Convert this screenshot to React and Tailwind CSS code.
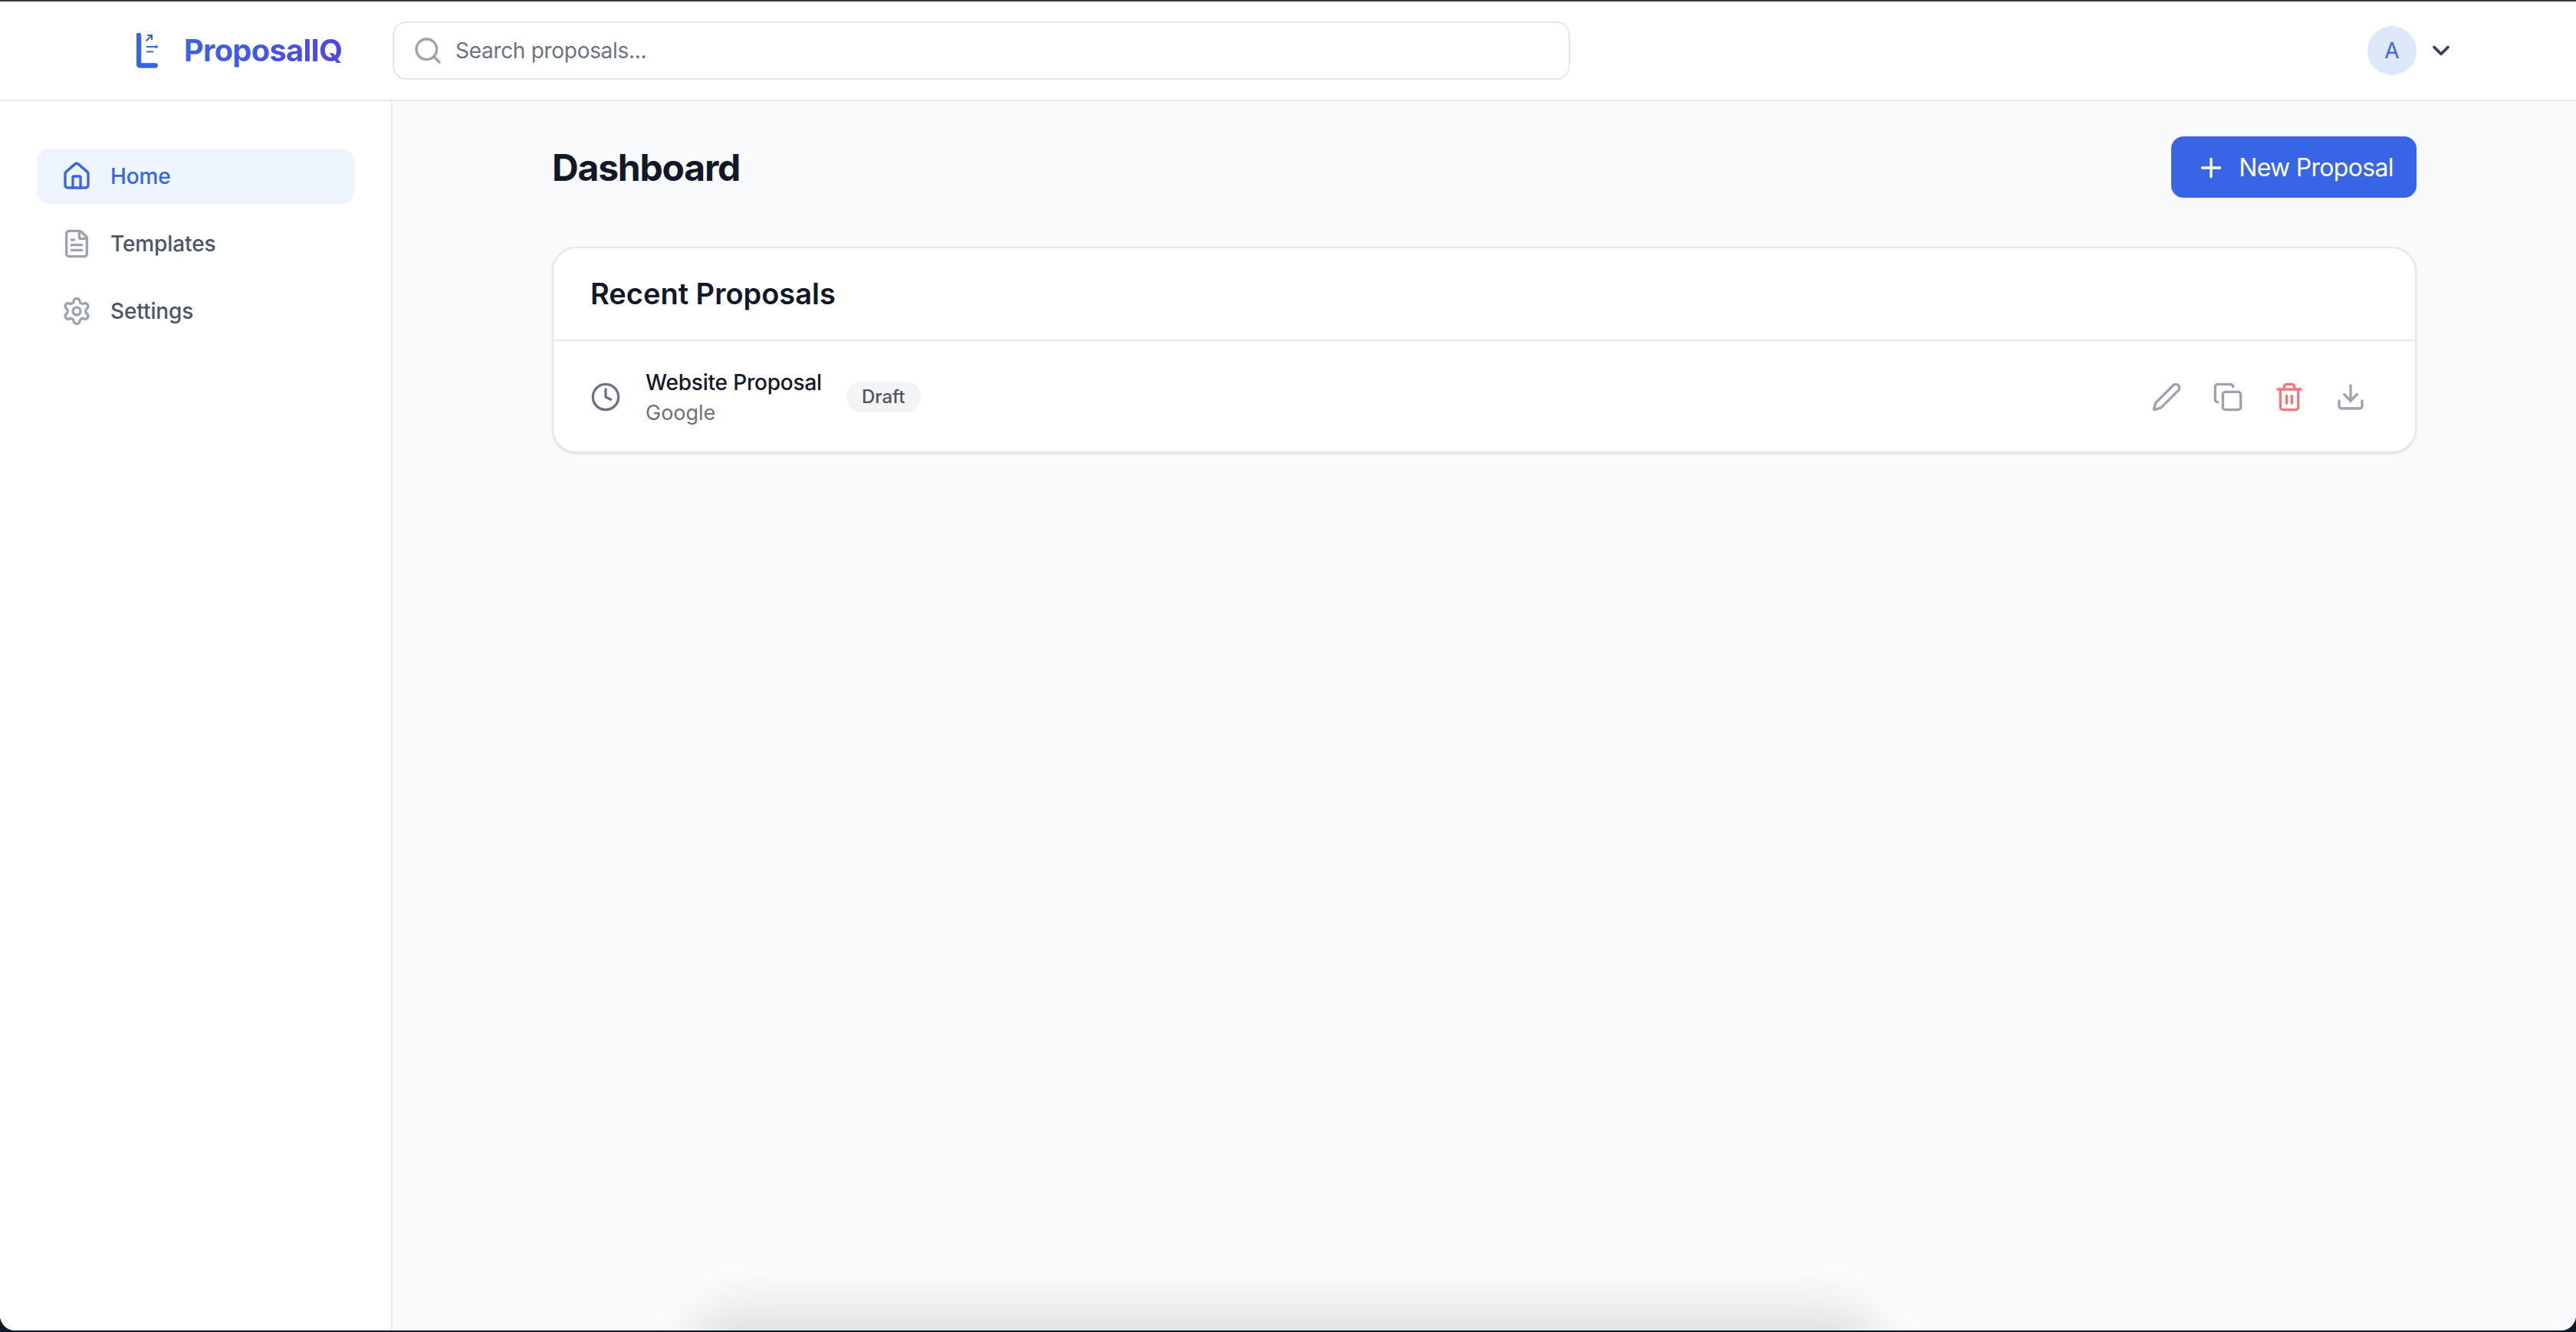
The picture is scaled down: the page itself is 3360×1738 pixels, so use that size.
import React from 'react';
import { House, FileText, Settings, Search, ChevronDown, Plus, Clock, Pen, Copy, Trash2, Download } from 'lucide-react';

function Logo() {
  return (
    <svg width="30" height="46" viewBox="0 0 30 46" fill="none" className="shrink-0">
      <path d="M3 3v37.5a2 2 0 0 0 2 2h19.5" stroke="#3864e6" strokeWidth="6.5" strokeLinecap="round" strokeLinejoin="round" />
      <path d="M12.5 10.5 19.5 3.5M14 3h6v6" stroke="#3864e6" strokeWidth="2" />
      <path d="M13 18h14M13 24.5h9" stroke="#3864e6" strokeWidth="2" />
      <path d="M25 15.5 28.5 18 25 20.5z" fill="#3864e6" />
    </svg>
  );
}

function NavItem({ icon: Icon, label, active }) {
  return (
    <a className={`flex h-[72px] items-center gap-[24px] rounded-2xl px-[32px] text-[28px] font-medium tracking-[-0.1px] ${active ? 'bg-[#eff5fe] text-[#3864e6]' : 'text-[#4b5563]'}`}>
      <Icon size={40} strokeWidth={2} className={active ? 'text-[#3864e6]' : 'text-[#9ca3af]'} />
      {label}
    </a>
  );
}

function IconButton({ icon: Icon, color }) {
  return (
    <button className={`p-[16px] ${color}`}>
      <Icon size={40} strokeWidth={2} />
    </button>
  );
}

export default function App() {
  const font = { fontFamily: 'Inter, sans-serif' };
  return (
    <div style={font} className="relative h-[1738px] w-full overflow-hidden bg-[#0f172a] pb-[2px]">
      <div className="flex h-full flex-col overflow-hidden rounded-b-[20px] bg-white">
        <div className="h-[2px] shrink-0 bg-[#3a3a3c]" />
        <header className="flex h-[130px] shrink-0 items-center border-b-2 border-[#e5e7eb] bg-white">
          <div className="flex w-[512px] shrink-0 items-center gap-[32px] pl-[178px]">
            <Logo />
            <span className="bg-gradient-to-r from-[#3864e6] to-[#4f46e5] bg-clip-text text-[40px] font-bold tracking-[-0.8px] text-transparent">ProposalIQ</span>
          </div>
          <div className="flex h-[76px] w-[1536px] items-center gap-[16px] rounded-[18px] border-2 border-[#e5e7eb] pl-[24px]">
            <Search size={40} strokeWidth={2} className="text-[#9ca3af]" />
            <span className="text-[28px] tracking-[-0.3px] text-[#6b7280]">Search proposals...</span>
          </div>
          <div className="ml-auto flex items-center gap-[14px] pr-[158px]">
            <div className="flex h-[64px] w-[64px] items-center justify-center rounded-full bg-[#dee8fb] text-[28px] text-[#3864e6]">A</div>
            <ChevronDown size={36} strokeWidth={2.5} className="text-[#374151]" />
          </div>
        </header>
        <div className="flex min-h-0 flex-1">
          <aside className="w-[512px] shrink-0 border-r-2 border-[#e5e7eb] bg-white pl-[48px] pr-[48px] pt-[62px]">
            <nav className="flex flex-col gap-[16px]">
              <NavItem icon={House} label="Home" active />
              <NavItem icon={FileText} label="Templates" />
              <NavItem icon={Settings} label="Settings" />
            </nav>
          </aside>
          <main className="flex-1 bg-gray-50 pl-[208px] pr-[208px] pt-[46px]">
            <div className="flex h-[80px] items-center justify-between">
              <h1 className="pt-[2px] text-[48px] font-bold tracking-tight text-[#111827]">Dashboard</h1>
              <button className="flex h-[80px] w-[320px] items-center justify-center gap-[16px] rounded-2xl bg-[#3864e6] pl-[2px] pt-[2px] text-[32px] font-normal tracking-[-0.7px] text-white">
                <Plus size={40} strokeWidth={2} />
                New Proposal
              </button>
            </div>
            <section className="mt-[64px] rounded-[32px] border-2 border-[#e5e7eb] bg-white shadow-sm">
              <div className="flex h-[121px] items-center border-b-2 border-[#e5e7eb] px-[48px]">
                <h2 className="text-[38px] font-semibold text-[#111827]">Recent Proposals</h2>
              </div>
              <div className="flex h-[144px] items-center pl-[48px] pr-[48px] pt-[1px]">
                <Clock size={40} strokeWidth={2} className="text-[#6b7280]" />
                <div className="ml-[32px]">
                  <div className="text-[28px] font-medium leading-[40px] tracking-[-0.2px] text-[#111827]">Website Proposal</div>
                  <div className="mt-[2px] text-[27px] leading-[36px] text-[#6b7280]">Google</div>
                </div>
                <span className="ml-[32px] flex h-[40px] items-center rounded-full bg-[#f3f4f6] px-[20px] text-[24px] font-medium text-[#4b5563]">Draft</span>
                <div className="ml-auto flex gap-[8px]">
                  <IconButton icon={Pen} color="text-[#9ca3af]" />
                  <IconButton icon={Copy} color="text-[#9ca3af]" />
                  <IconButton icon={Trash2} color="text-[#ee7a78]" />
                  <IconButton icon={Download} color="text-[#9ca3af]" />
                </div>
              </div>
            </section>
          </main>
        </div>
      </div>
      {/* window shadow peeking in at the bottom */}
      <div className="pointer-events-none absolute bottom-[-60px] left-[930px] h-[60px] w-[1490px] rounded-[30px] shadow-[0_0_60px_30px_rgba(0,0,0,0.11)]" />
    </div>
  );
}
